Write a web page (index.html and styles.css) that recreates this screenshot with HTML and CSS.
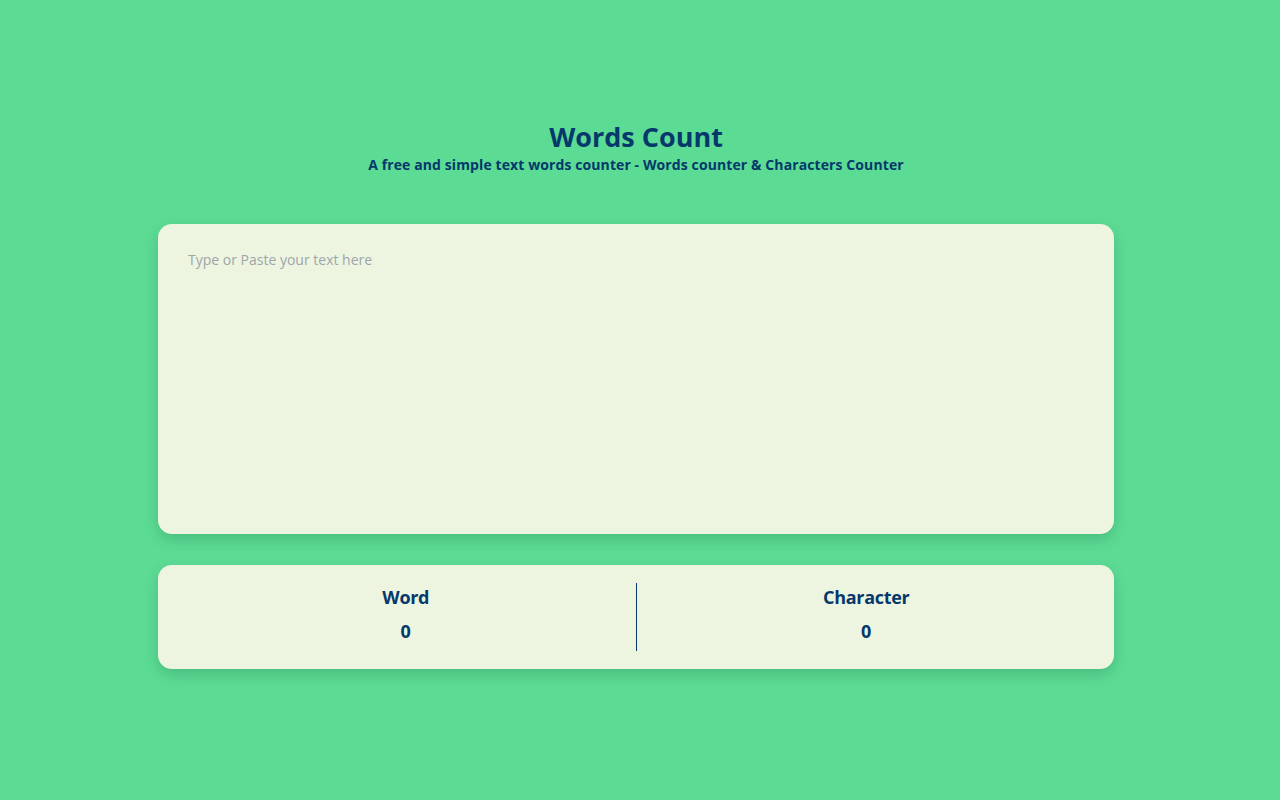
FILE: index.html
```html
<!DOCTYPE html>
<html lang="en">
<head>
<meta charset="utf-8">
<title>Words Count</title>
<link rel="stylesheet" href="styles.css">
</head>
<body>
<div class="page">
  <main class="main">
    <header class="header">
      <h1 class="title">Words Count</h1>
      <p class="subtitle">A free and simple text words counter - Words counter &amp; Characters Counter</p>
    </header>
    <div class="editor-card">
      <textarea class="editor" placeholder="Type or Paste your text here"></textarea>
    </div>
    <section class="stats-card">
      <div class="stat">
        <div class="stat-label">Word</div>
        <div class="stat-value">0</div>
      </div>
      <div class="divider"></div>
      <div class="stat">
        <div class="stat-label">Character</div>
        <div class="stat-value">0</div>
      </div>
    </section>
  </main>
</div>
</body>
</html>
```

FILE: styles.css
```css
* { box-sizing: border-box; }
html, body {
  margin: 0;
  height: 100%;
}
body {
  background: #5cdb95;
  font-family: "Open Sans", "Noto Sans", sans-serif;
  color: #05386b;
}
.page {
  padding: 0 8px 0 0;
  min-height: 100%;
}
.main {
  width: 956px;
  margin: 0 auto;
  padding-top: 118px;
}
.header {
  text-align: center;
}
.title {
  margin: 0;
  font-size: 27px;
  font-weight: 700;
  line-height: 38px;
}
.subtitle {
  margin: 0;
  font-size: 14px;
  font-weight: 700;
  line-height: 18px;
  letter-spacing: 0.1px;
}
.editor-card {
  margin-top: 50px;
  height: 310px;
  background: #edf5e1;
  border-radius: 14px;
  box-shadow: 0 6px 14px rgba(0, 60, 30, 0.18);
  padding: 26px 30px;
}
.editor {
  width: 100%;
  height: 100%;
  border: none;
  outline: none;
  resize: none;
  background: transparent;
  font-family: inherit;
  font-size: 14px;
  color: #05386b;
  padding: 0;
}
.editor::placeholder {
  color: #9ea6a9;
}
.stats-card {
  margin-top: 31px;
  height: 104px;
  background: #edf5e1;
  border-radius: 14px;
  box-shadow: 0 6px 14px rgba(0, 60, 30, 0.18);
  padding: 18px;
  display: flex;
}
.stat {
  flex: 1;
  text-align: center;
  padding-top: 1px;
}
.stat-label {
  font-size: 18px;
  font-weight: 700;
  line-height: 26px;
  letter-spacing: -0.3px;
}
.stat-value {
  margin-top: 9px;
  font-size: 18px;
  font-weight: 700;
  line-height: 24px;
}
.divider {
  width: 1px;
  background: #05386b;
}
```
